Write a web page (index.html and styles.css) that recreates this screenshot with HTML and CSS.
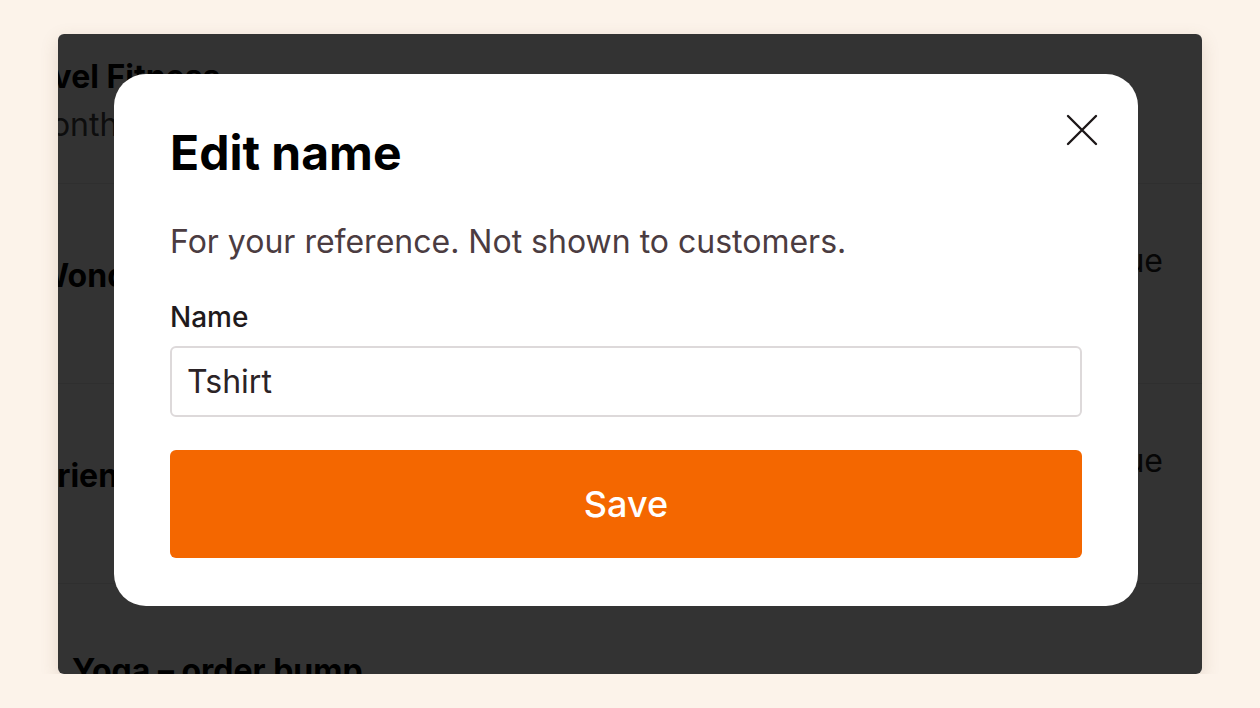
FILE: index.html
```html
<!DOCTYPE html>
<html lang="en">
<head>
<meta charset="utf-8">
<title>Edit name</title>
<link rel="stylesheet" href="styles.css">
</head>
<body>
<div class="panel">
  <div class="list">
    <div class="row row-first">
      <div class="row-main shift-a">
        <div class="row-title">Level Fitness</div>
        <div class="row-sub shift-sub">Monthly</div>
      </div>
    </div>
    <div class="row">
      <div class="row-main shift-b">
        <div class="row-title">Wonderful</div>
      </div>
      <div class="row-side">Continue</div>
    </div>
    <div class="row">
      <div class="row-main shift-c">
        <div class="row-title">Friends</div>
      </div>
      <div class="row-side">Continue</div>
    </div>
    <div class="row row-last">
      <div class="row-main">
        <div class="row-title">Yoga – order bump</div>
      </div>
    </div>
  </div>
  <div class="overlay">
    <div class="modal" role="dialog" aria-labelledby="modal-title">
      <button class="close" aria-label="Close">
        <svg viewBox="0 0 36 36" width="36" height="36" fill="none" stroke="#1c1718" stroke-width="2.4" stroke-linecap="round">
          <path d="M4 4 L32 32 M32 4 L4 32"/>
        </svg>
      </button>
      <h1 id="modal-title" class="modal-title">Edit name</h1>
      <p class="modal-desc">For your reference. Not shown to customers.</p>
      <label class="field-label" for="name">Name</label>
      <input id="name" class="field-input" type="text" value="Tshirt">
      <button class="save">Save</button>
    </div>
  </div>
</div>
</body>
</html>
```

FILE: styles.css
```css
* { box-sizing: border-box; }

html, body {
  margin: 0;
  padding: 0;
  background: #fcf3ea;
  font-family: "Inter", "Noto Sans", sans-serif;
}

body {
  padding: 34px 58px 0 58px;
}

.panel {
  position: relative;
  width: 1144px;
  height: 640px;
  background: #ffffff;
  border-radius: 6px;
  overflow: hidden;
  box-shadow: 0 6px 18px rgba(120, 90, 60, 0.18);
}

.list {
  display: flex;
  flex-direction: column;
}

.row {
  height: 200px;
  flex: none;
  display: flex;
  align-items: flex-start;
  justify-content: space-between;
  padding: 0 39px 0 14px;
  border-bottom: 1px solid #ebebeb;
}

.row-first {
  height: 150px;
}

.row-main {
  display: flex;
  flex-direction: column;
  gap: 8px;
  margin-top: 72px;
}

.row-first .row-main { margin-top: 23px; }
.row-last .row-main { margin-top: 67px; }

.shift-a { margin-left: -56px; }
.shift-sub { margin-left: 6px; }
.shift-b { margin-left: -36px; }
.shift-c { margin-left: -33px; }

.row-title {
  font-size: 32px;
  line-height: 40px;
  font-weight: 700;
  color: #000;
  white-space: nowrap;
}

.row-sub {
  font-size: 32px;
  line-height: 40px;
  color: #444;
  white-space: nowrap;
}

.row-side {
  font-size: 32px;
  line-height: 40px;
  color: #222;
  margin-top: 57px;
}

.overlay {
  position: absolute;
  inset: 0;
  background: rgba(0, 0, 0, 0.8);
  padding: 40px 0 0 56px;
}

.modal {
  position: relative;
  width: 1024px;
  height: 532px;
  background: #ffffff;
  border-radius: 32px;
  padding: 50px 56px 48px 56px;
  display: flex;
  flex-direction: column;
}

.close {
  position: absolute;
  top: 38px;
  right: 38px;
  width: 36px;
  height: 36px;
  padding: 0;
  border: 0;
  background: transparent;
  display: block;
}

.close svg { display: block; }

.modal-title {
  margin: 0;
  font-size: 48px;
  line-height: 58px;
  font-weight: 700;
  color: #000;
}

.modal-desc {
  margin: 40px 0 0 0;
  font-size: 32px;
  line-height: 40px;
  color: #4b3c41;
}

.field-label {
  margin-top: 38px;
  font-size: 28px;
  line-height: 34px;
  font-weight: 500;
  color: #1f1a1c;
}

.field-input {
  margin-top: 12px;
  height: 71px;
  width: 100%;
  border: 2px solid #ddd9da;
  border-radius: 6px;
  padding: 0 15px;
  font-family: inherit;
  font-size: 32px;
  color: #2b2326;
  background: #fff;
  outline: none;
}

.save {
  margin-top: 33px;
  height: 108px;
  width: 100%;
  border: 0;
  border-radius: 6px;
  background: #f46700;
  color: #fff;
  font-family: inherit;
  font-size: 36px;
  font-weight: 500;
}
```
